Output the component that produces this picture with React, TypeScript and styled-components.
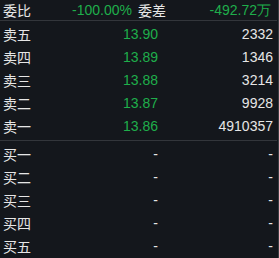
import React from "react";
import styled, { createGlobalStyle } from "styled-components";

const Global = createGlobalStyle`
  html, body { margin: 0; padding: 0; background: #14171c; }
  body { font-family: "Liberation Sans", "Noto Sans CJK SC", sans-serif; }
`;

const Panel = styled.div`
  width: 279px;
  height: 258px;
  box-sizing: border-box;
  background: #14171c;
  border-right: 1px solid #3a3d42;
  padding-right: 1px;
  overflow: hidden;
  color: #e6e6e6;
  font-size: 14px;
`;

const Header = styled.div`
  height: 20px;
  display: grid;
  grid-template-columns: 132px 1fr;
  align-items: center;
  border-bottom: 1px solid #33363b;
`;

const HeaderCell = styled.div`
  display: flex;
  justify-content: space-between;
  align-items: center;
  padding: 0 ${(p: { $padR: number }) => p.$padR}px 0 ${(p: { $padL?: number }) => p.$padL ?? 3}px;
`;

const Label = styled.span`
  font-family: "Noto Sans CJK SC", sans-serif;
  color: #e6e6e6;
  line-height: 1;
`;

const Value = styled.span<{ $green?: boolean }>`
  font-family: "Liberation Sans", sans-serif;
  color: ${(p) => (p.$green ? "#1fae4b" : "#e6e6e6")};
  line-height: 1;
`;

const Section = styled.div<{ $bottom?: boolean }>`
  padding: 1px 0 ${(p) => (p.$bottom ? 3 : 0)}px;
  border-bottom: ${(p) => (p.$bottom ? "1px solid #33363b" : "none")};
`;

const Row = styled.div`
  height: 23px;
  display: grid;
  grid-template-columns: 158px 115px;
  align-items: center;
`;

const LeftCell = styled.div`
  display: flex;
  justify-content: space-between;
  align-items: center;
  padding-left: 3px;
`;

const RightCell = styled.div`
  text-align: right;
`;

const sells = [
  { label: "卖五", price: "13.90", vol: "2332" },
  { label: "卖四", price: "13.89", vol: "1346" },
  { label: "卖三", price: "13.88", vol: "3214" },
  { label: "卖二", price: "13.87", vol: "9928" },
  { label: "卖一", price: "13.86", vol: "4910357" },
];

const buys = ["买一", "买二", "买三", "买四", "买五"];

export default function App() {
  return (
    <>
      <Global />
      <Panel>
        <Header>
          <HeaderCell $padR={0}>
            <Label>委比</Label>
            <Value $green>-100.00%</Value>
          </HeaderCell>
          <HeaderCell $padR={6} $padL={6}>
            <Label>委差</Label>
            <Value $green>-492.72万</Value>
          </HeaderCell>
        </Header>
        <Section $bottom>
          {sells.map((s) => (
            <Row key={s.label}>
              <LeftCell>
                <Label>{s.label}</Label>
                <Value $green>{s.price}</Value>
              </LeftCell>
              <RightCell>
                <Value>{s.vol}</Value>
              </RightCell>
            </Row>
          ))}
        </Section>
        <Section>
          {buys.map((b) => (
            <Row key={b}>
              <LeftCell>
                <Label>{b}</Label>
                <Value>-</Value>
              </LeftCell>
              <RightCell>
                <Value>-</Value>
              </RightCell>
            </Row>
          ))}
        </Section>
      </Panel>
    </>
  );
}
